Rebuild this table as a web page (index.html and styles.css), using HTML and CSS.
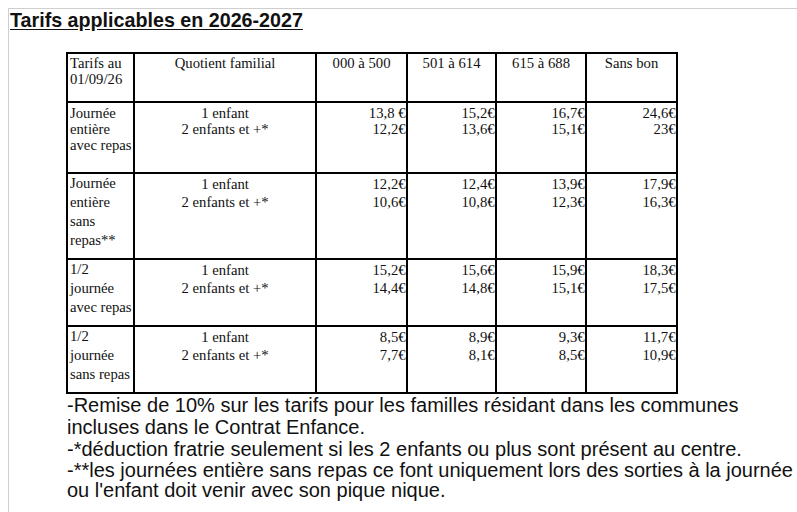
FILE: index.html
```html
<!DOCTYPE html>
<html lang="fr">
<head>
<meta charset="utf-8">
<title>Tarifs applicables en 2026-2027</title>
<link rel="stylesheet" href="styles.css">
</head>
<body>
<div class="frame">
  <h1 class="title">Tarifs applicables en 2026-2027</h1>
  <table class="tarifs">
    <tr class="r-head">
      <td class="c1">Tarifs au<br>01/09/26</td>
      <td class="c2 center">Quotient familial</td>
      <td class="c3 center">000 à 500</td>
      <td class="c4 center">501 à 614</td>
      <td class="c5 center">615 à 688</td>
      <td class="c6 center">Sans bon</td>
    </tr>
    <tr class="r1">
      <td class="lbl">Journée<br>entière<br>avec repas</td>
      <td class="center">1 enfant<br>2 enfants et +*</td>
      <td class="price">13,8 €<br>12,2€</td>
      <td class="price">15,2€<br>13,6€</td>
      <td class="price">16,7€<br>15,1€</td>
      <td class="price">24,6€<br>23€</td>
    </tr>
    <tr class="r2">
      <td class="lbl">Journée<br>entière<br>sans<br>repas**</td>
      <td class="center">1 enfant<br>2 enfants et +*</td>
      <td class="price">12,2€<br>10,6€</td>
      <td class="price">12,4€<br>10,8€</td>
      <td class="price">13,9€<br>12,3€</td>
      <td class="price">17,9€<br>16,3€</td>
    </tr>
    <tr class="r3">
      <td class="lbl">1/2<br>journée<br>avec repas</td>
      <td class="center">1 enfant<br>2 enfants et +*</td>
      <td class="price">15,2€<br>14,4€</td>
      <td class="price">15,6€<br>14,8€</td>
      <td class="price">15,9€<br>15,1€</td>
      <td class="price">18,3€<br>17,5€</td>
    </tr>
    <tr class="r4">
      <td class="lbl">1/2<br>journée<br>sans repas</td>
      <td class="center">1 enfant<br>2 enfants et +*</td>
      <td class="price">8,5€<br>7,7€</td>
      <td class="price">8,9€<br>8,1€</td>
      <td class="price">9,3€<br>8,5€</td>
      <td class="price">11,7€<br>10,9€</td>
    </tr>
  </table>
  <div class="notes">
    <p class="note n1">-Remise de 10% sur les tarifs pour les familles résidant dans les communes<br>incluses dans le Contrat Enfance.</p>
    <p class="note n2">-*déduction fratrie seulement si les 2 enfants ou plus sont présent au centre.</p>
    <p class="note n3">-**les journées entière sans repas ce font uniquement lors des sorties à la journée<br>ou l'enfant doit venir avec son pique nique.</p>
  </div>
</div>
</body>
</html>
```

FILE: styles.css
```css
html, body {
  margin: 0;
  padding: 0;
  background: #ffffff;
  overflow: hidden;
}

body {
  padding: 8px 0 0 8px;
  color: #111111;
}

.frame {
  border-top: 1px solid #cfcfcf;
  border-left: 1px solid #cfcfcf;
  min-height: 520px;
}

.title {
  margin: 0;
  padding-left: 1px;
  font-family: "Liberation Sans", Arial, sans-serif;
  font-size: 19.7px;
  font-weight: bold;
  line-height: 22px;
  text-decoration: underline;
  text-underline-offset: 2px;
  color: #111111;
}

.tarifs {
  margin: 21px 0 0 57px;
  border-collapse: separate;
  border-spacing: 0;
  table-layout: fixed;
  font-family: "Liberation Serif", "Times New Roman", serif;
  font-size: 14.7px;
  color: #111111;
}

.tarifs td {
  box-sizing: border-box;
  vertical-align: top;
  padding: 1px 1px 0 2px;
  border-right: 2px solid #000;
  border-bottom: 2px solid #000;
  line-height: 18px;
  white-space: nowrap;
}

.tarifs tr > td:first-child {
  border-left: 2px solid #000;
}

.r-head td {
  border-top: 2px solid #000;
  line-height: 16px;
}

.c1 { width: 68px; }
.c2 { width: 182px; }
.c3 { width: 91px; }
.c4 { width: 89px; }
.c5 { width: 90px; }
.c6 { width: 91px; }

.r-head { height: 51px; }
.r1 { height: 71px; }
.r2 { height: 86px; }
.r3 { height: 67px; }
.r4 { height: 67px; }

.r1 td {
  line-height: 16px;
  padding-top: 2px;
}

.r2 .lbl, .r3 .lbl, .r4 .lbl {
  line-height: 19px;
  padding-top: 0;
}

.center {
  text-align: center;
}

.tarifs td.price {
  text-align: right;
  padding-right: 0;
}

.notes {
  margin-left: 58px;
  font-family: "Liberation Sans", Arial, sans-serif;
  font-size: 20px;
  color: #111111;
  white-space: nowrap;
}

.note {
  margin: 0;
}

.n1 { line-height: 22px; }
.n2 { line-height: 22px; }
.n3 { line-height: 20px; }
```
